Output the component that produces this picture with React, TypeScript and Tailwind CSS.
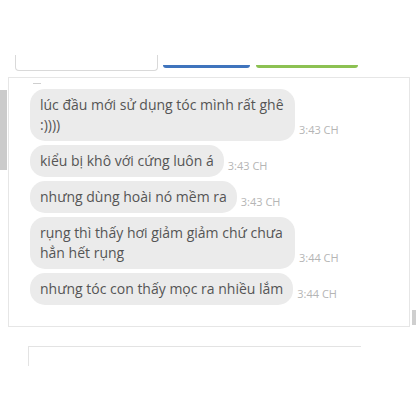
import React from "react";

type Msg = { text: string; time: string };

const messages: Msg[] = [
  { text: "lúc đầu mới sử dụng tóc mình rất ghê :))))", time: "3:43 CH" },
  { text: "kiểu bị khô với cứng luôn á", time: "3:43 CH" },
  { text: "nhưng dùng hoài nó mềm ra", time: "3:43 CH" },
  { text: "rụng thì thấy hơi giảm giảm chứ chưa hẳn hết rụng", time: "3:44 CH" },
  { text: "nhưng tóc con thấy mọc ra nhiều lắm", time: "3:44 CH" },
];

function Bubble({ msg }: { msg: Msg }) {
  return (
    <div className="flex items-end">
      <div className="max-w-[265px] rounded-[15px] bg-[#ebebeb] px-[10px] py-[6px] text-[14px] leading-[20px] text-[#555555]">
        {msg.text}
      </div>
      <span className="mb-[4px] ml-[4px] text-[11px] leading-[14px] text-[#b5b5b5]">
        {msg.time}
      </span>
    </div>
  );
}

export default function App() {
  return (
    <div
      className="relative h-[416px] w-[416px] overflow-hidden bg-white"
      style={{ fontFamily: '"Open Sans", "Noto Sans", sans-serif' }}
    >
      <div className="h-[55px]" />

      {/* cropped toolbar */}
      <div className="flex h-[16px] items-end pl-[15px]">
        <div className="h-full w-[143px] rounded-b-[4px] border border-t-0 border-[#d9d9d9]" />
        <div className="mb-[3px] ml-[5px] h-[3px] w-[87px] rounded-b-[3px] bg-[#3f74bd]" />
        <div className="mb-[3px] ml-[6px] h-[3px] w-[102px] rounded-b-[3px] bg-[#8cc152]" />
      </div>

      <div className="h-[6px]" />

      <div className="flex">
        <div className="w-[8px]">
          <div className="mt-[13px] h-[80px] w-[7px] bg-[#cbcbcb]" />
        </div>

        <div className="h-[250px] w-[402px] border border-[#e6e6e6] bg-white">
          <div className="ml-[24px] mt-[5px] h-px w-[8px] bg-[#cfcfcf]" />
          <div className="mt-[5px] flex flex-col gap-[4px] pl-[21px]">
            {messages.map((m, i) => (
              <Bubble key={i} msg={m} />
            ))}
          </div>
        </div>

        <div className="flex w-[6px] flex-col">
          <div className="ml-[2px] mt-[233px] h-[15px] w-[4px] bg-[#cfcfcf]" />
        </div>
      </div>

      <div className="ml-[28px] mt-[19px] h-[20px] w-[333px] border-l border-t border-[#e3e3e3]" />
    </div>
  );
}
